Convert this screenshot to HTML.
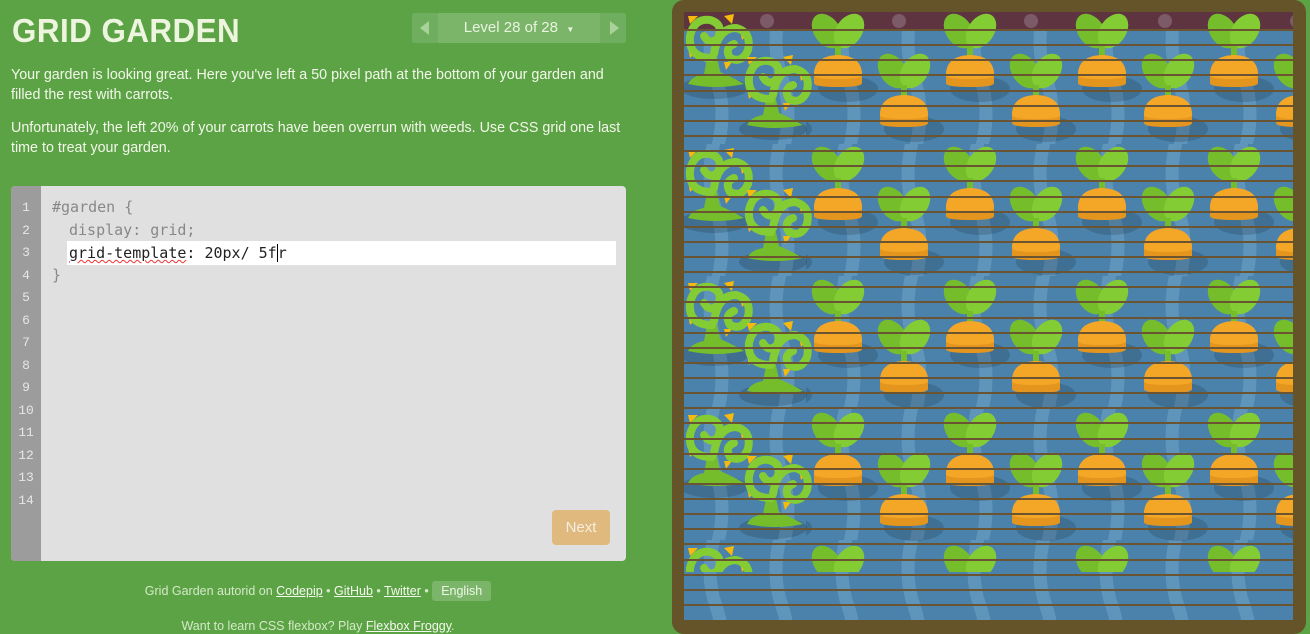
<!DOCTYPE html>
<html><head><meta charset="utf-8"><style>
*{margin:0;padding:0;box-sizing:border-box}
body{width:1310px;height:634px;background:#5ca346;font-family:"Liberation Sans",sans-serif;position:relative;overflow:hidden;color:#f2f6e8}
h1{position:absolute;left:12px;top:12px;font-size:33px;font-weight:bold;letter-spacing:0.5px;color:#eef5df;transform:scaleX(0.95);transform-origin:left}
.nav{position:absolute;left:412px;top:13px;width:214px;height:30px;background:#7ab56a;border-radius:3px}
.nav .l,.nav .r{position:absolute;top:0;width:26px;height:30px;background:#6fae5e}
.nav .l{left:0;border-radius:3px 0 0 3px}.nav .r{right:0;border-radius:0 3px 3px 0}
.nav .l:after{content:"";position:absolute;left:8px;top:8px;border:7px solid transparent;border-right:9px solid #a8d29a;border-left:0}
.nav .r:after{content:"";position:absolute;left:10px;top:8px;border:7px solid transparent;border-left:9px solid #a8d29a;border-right:0}
.nav span{position:absolute;left:0;right:0;top:6px;text-align:center;font-size:15px;color:#eaf3e0}
p{position:absolute;left:11px;font-size:14.3px;line-height:20px;width:620px;color:#f3f7ea}
.ed{position:absolute;left:11px;top:186px;width:615px;height:375px;background:#e0e0e0;border-radius:4px;overflow:hidden}
.gut{position:absolute;left:0;top:0;width:30px;height:100%;background:#9c9c9c}
.ln{position:absolute;left:0;width:30px;text-align:center;font-family:"Liberation Mono",monospace;font-size:13px;color:#e6e6e6}
.cd{position:absolute;font-family:"DejaVu Sans Mono","Liberation Mono",monospace;font-size:15px;color:#888}
.inp{position:absolute;left:56px;top:55px;width:549px;height:24px;background:#fff}
.next{position:absolute;left:541px;top:324px;width:58px;height:35px;background:#dfb97e;border-radius:4px;color:#f5eee0;font-size:15px;text-align:center;line-height:35px}
.ft{position:absolute;left:0;width:636px;text-align:center;font-size:12.5px;color:#d5e9c8}
.ft u{color:#f4f9ee}
.eng{display:inline-block;background:#7ab56a;padding:3px 9px;border-radius:3px;color:#f0f7ea}
</style></head><body>
<h1>GRID GARDEN</h1>
<div class="nav"><div class="l"></div><span>Level 28 of 28 &nbsp;<small style="font-size:8px">▼</small></span><div class="r"></div></div>
<p style="top:65px">Your garden is looking great. Here you've left a 50 pixel path at the bottom of your garden and filled the rest with carrots.</p>
<p style="top:118px">Unfortunately, the left 20% of your carrots have been overrun with weeds. Use CSS grid one last time to treat your garden.</p>
<div class="ed">
<div class="gut"></div>
<div class="ln" style="top:14px">1</div><div class="ln" style="top:37px">2</div><div class="ln" style="top:59px">3</div><div class="ln" style="top:82px">4</div><div class="ln" style="top:104px">5</div><div class="ln" style="top:127px">6</div><div class="ln" style="top:149px">7</div><div class="ln" style="top:172px">8</div><div class="ln" style="top:194px">9</div><div class="ln" style="top:217px">10</div><div class="ln" style="top:239px">11</div><div class="ln" style="top:262px">12</div><div class="ln" style="top:284px">13</div><div class="ln" style="top:307px">14</div>
<div class="cd" style="left:41px;top:12px">#garden {</div>
<div class="cd" style="left:58px;top:35px">display: grid;</div>
<div class="inp"></div>
<div class="cd" style="left:58px;top:58px;color:#222"><span style="text-decoration:underline wavy #e33;text-decoration-thickness:1px">grid-template</span>: 20px/ 5f<span style="border-left:1px solid #000"></span>r</div>
<div class="cd" style="left:41px;top:80px">}</div>
<div class="next">Next</div>
</div>
<div class="ft" style="top:581px">Grid Garden autorid on <u>Codepip</u> • <u>GitHub</u> • <u>Twitter</u> • <span class="eng">English</span></div>
<div class="ft" style="top:619px">Want to learn CSS flexbox? Play <u>Flexbox Froggy</u>.</div>

<svg style="position:absolute;left:672px;top:0" width="638" height="634" viewBox="672 0 638 634">
<defs>
<g id="c">
<ellipse cx="10" cy="74" rx="30" ry="13" fill="#000" opacity="0.15"/>
<ellipse cx="-11" cy="16" rx="13" ry="19" transform="rotate(-35 -11 16)" fill="#76bd2c"/>
<ellipse cx="11" cy="16" rx="13" ry="19" transform="rotate(35 11 16)" fill="#84cc34"/>
<rect x="-3" y="30" width="6" height="14" fill="#76bd2c"/>
<path d="M-24 60 Q-24 41 0 40 Q24 41 24 60 L24 68 Q24 72 0 72 Q-24 72 -24 68Z" fill="#e4951e"/>
<path d="M-24 60 Q-24 41 0 40 Q24 41 24 60 Q24 64 0 64 Q-24 64 -24 60Z" fill="#f4a727"/>
</g>
<g id="w">
<ellipse cx="28" cy="74" rx="34" ry="11" fill="#000" opacity="0.15"/>
<path d="M2 2 L12 2 L4 10Z M38 2 L48 0 L46 10Z M54 16 L64 18 L56 26Z M2 34 L12 36 L4 44Z M38 48 L46 48 L40 56Z" fill="#f6b90c"/>
<path d="M22 40 L18 60 Q6 62 2 70 Q30 76 58 70 Q44 62 34 58 L30 40Z" fill="#76bd2c"/>
<path d="M26 44 Q2 44 4 22 Q8 4 24 6 Q38 10 32 24 Q24 32 18 22 M28 40 Q32 14 50 14 Q66 18 62 36 Q56 50 44 44 Q38 34 48 30" fill="none" stroke="#84cc34" stroke-width="8" stroke-linecap="round"/>
</g>
<pattern id="p" x="684" y="12" width="132" height="133" patternUnits="userSpaceOnUse">
<use href="#c" x="154" y="3"/><use href="#c" x="22" y="3"/>
<use href="#c" x="88" y="43"/>
</pattern>
<pattern id="wv" x="684" y="12" width="66" height="132" patternUnits="userSpaceOnUse">
<path d="M32 -10 Q20 33 32 66 Q44 99 32 142" fill="none" stroke="#5f94bb" stroke-width="13"/>
</pattern>
<clipPath id="cl"><rect x="684" y="12" width="609" height="608"/></clipPath>
</defs>
<rect x="672" y="0" width="634" height="634" rx="12" fill="#65542a"/>
<g clip-path="url(#cl)">
<rect x="684" y="12" width="609" height="608" fill="#4a82ab"/>
<rect x="684" y="12" width="609" height="608" fill="url(#wv)"/>
<rect x="684" y="12" width="609" height="18" fill="#5e3441"/>
<circle cx="767" cy="21" r="7" fill="#7c5a68"/><circle cx="899" cy="21" r="7" fill="#7c5a68"/><circle cx="1031" cy="21" r="7" fill="#7c5a68"/><circle cx="1165" cy="21" r="7" fill="#7c5a68"/><circle cx="1297" cy="21" r="7" fill="#7c5a68"/>
<rect x="806" y="12" width="487" height="560" fill="url(#p)"/>
<use href="#w" x="686" y="14"/><use href="#w" x="745" y="55"/>
<use href="#w" x="686" y="148"/><use href="#w" x="745" y="188"/>
<use href="#w" x="686" y="281"/><use href="#w" x="745" y="321"/>
<use href="#w" x="686" y="413"/><use href="#w" x="745" y="454"/>
<use href="#w" x="686" y="546"/>
<rect x="684" y="572" width="609" height="48" fill="#4a82ab"/>
<rect x="684" y="572" width="609" height="48" fill="url(#wv)"/>
<g fill="#6a5431">
<rect x="684" y="29" width="609" height="2"/><rect x="684" y="44" width="609" height="2"/><rect x="684" y="59" width="609" height="2"/><rect x="684" y="74" width="609" height="2"/><rect x="684" y="90" width="609" height="2"/><rect x="684" y="105" width="609" height="2"/><rect x="684" y="120" width="609" height="2"/><rect x="684" y="135" width="609" height="2"/><rect x="684" y="150" width="609" height="2"/><rect x="684" y="165" width="609" height="2"/><rect x="684" y="180" width="609" height="2"/><rect x="684" y="196" width="609" height="2"/><rect x="684" y="211" width="609" height="2"/><rect x="684" y="226" width="609" height="2"/><rect x="684" y="241" width="609" height="2"/><rect x="684" y="256" width="609" height="2"/><rect x="684" y="271" width="609" height="2"/><rect x="684" y="286" width="609" height="2"/><rect x="684" y="301" width="609" height="2"/><rect x="684" y="317" width="609" height="2"/><rect x="684" y="332" width="609" height="2"/><rect x="684" y="347" width="609" height="2"/><rect x="684" y="362" width="609" height="2"/><rect x="684" y="377" width="609" height="2"/><rect x="684" y="392" width="609" height="2"/><rect x="684" y="407" width="609" height="2"/><rect x="684" y="422" width="609" height="2"/><rect x="684" y="438" width="609" height="2"/><rect x="684" y="453" width="609" height="2"/><rect x="684" y="468" width="609" height="2"/><rect x="684" y="483" width="609" height="2"/><rect x="684" y="498" width="609" height="2"/><rect x="684" y="513" width="609" height="2"/><rect x="684" y="528" width="609" height="2"/><rect x="684" y="543" width="609" height="2"/><rect x="684" y="559" width="609" height="2"/><rect x="684" y="574" width="609" height="2"/><rect x="684" y="589" width="609" height="2"/><rect x="684" y="604" width="609" height="2"/>
</g>
</g>
</svg>
</body></html>
